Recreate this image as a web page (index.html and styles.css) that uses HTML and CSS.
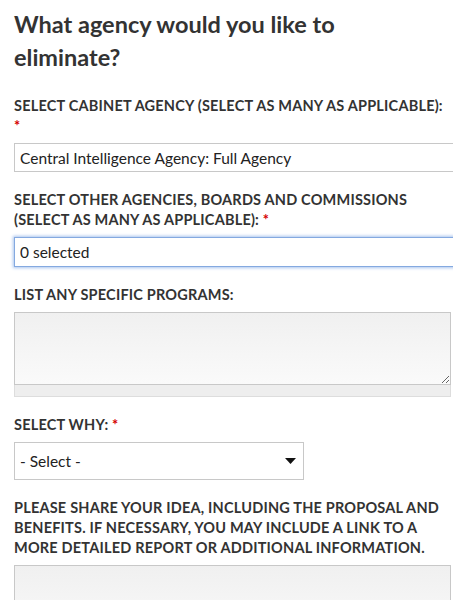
FILE: index.html
```html
<!DOCTYPE html>
<html lang="en">

<head>
    <meta charset="UTF-8">
    <meta name="viewport" content="width=device-width, initial-scale=1.0">
    <title>Eliminate an agency</title>

    <link rel="stylesheet" href="styles.css">

</head>

<body>
    <div class="page">
        <h2>What agency would you like to eliminate?</h2>

        <form id="formulario">
            <div class="campo">
                <label>Select cabinet agency (select as many as applicable): <span class="req">*</span></label>
                <input type="text" class="largo" value="Central Intelligence Agency: Full Agency">
            </div>

            <div class="campo">
                <label>Select other agencies, boards and commissions (select as many as applicable): <span class="req">*</span></label>
                <input type="text" class="largo foco" value="0 selected">
            </div>

            <div class="campo">
                <label>List any specific programs:</label>
                <textarea rows="4"></textarea>
                <div class="grippie"></div>
            </div>

            <div class="campo">
                <label>Select why: <span class="req">*</span></label>
                <div class="select">
                    <span>- Select -</span>
                    <svg width="11" height="6" viewBox="0 0 11 6"><path d="M0 0h11L5.5 6z" fill="#111" /></svg>
                </div>
            </div>

            <div class="campo">
                <label>Please share your idea, including the proposal and benefits. If necessary, you may include a link to a more detailed report or additional information.</label>
                <textarea rows="4"></textarea>
            </div>
        </form>
    </div>
</body>

</html>
```

FILE: styles.css
```css
body {
    margin: 0;
    background-color: #fff;
    color: #333;
    font-family: Lato, 'Liberation Sans', sans-serif;
}

.page {
    width: 453px;
    box-sizing: border-box;
    padding-left: 14px;
    overflow: hidden;
}

h2 {
    font-size: 23.5px;
    line-height: 33px;
    font-weight: bold;
    margin: 8px 0 0 0;
    padding-right: 100px;
}

form {
    display: flex;
    flex-direction: column;
    gap: 18px;
    margin-top: 22px;
}

.campo {
    display: flex;
    flex-direction: column;
}

label {
    display: block;
    font-size: 14.5px;
    line-height: 20px;
    font-weight: bold;
    text-transform: uppercase;
    letter-spacing: 0.2px;
    margin-bottom: 7px;
    padding-right: 6px;
}

.req {
    color: #d50000;
}

input {
    font-family: inherit;
    font-size: 15.5px;
    color: #222;
    height: 29px;
    box-sizing: border-box;
    border: 1px solid #c8c8c8;
    padding: 0 5px;
    margin: 0;
    outline: none;
}

input.largo {
    width: 120%;
}

input.foco {
    height: 30px;
    border-color: #84a9e0;
    box-shadow: 0 0 3px 1px #a9c4ee;
}

textarea {
    display: block;
    box-sizing: border-box;
    width: 437px;
    height: 73px;
    margin: 0;
    border: 1px solid #c8c8c8;
    background: linear-gradient(#f0f0f0, #fafafa);
    resize: vertical;
}

.grippie {
    width: 437px;
    height: 12px;
    box-sizing: border-box;
    background-color: #eee;
    border: 1px solid #ddd;
    border-top: none;
}

.select {
    width: 290px;
    height: 38px;
    box-sizing: border-box;
    border: 1px solid #c8c8c8;
    display: flex;
    justify-content: space-between;
    align-items: center;
    padding: 0 7px 0 5px;
    font-size: 15.5px;
    color: #222;
}
```
